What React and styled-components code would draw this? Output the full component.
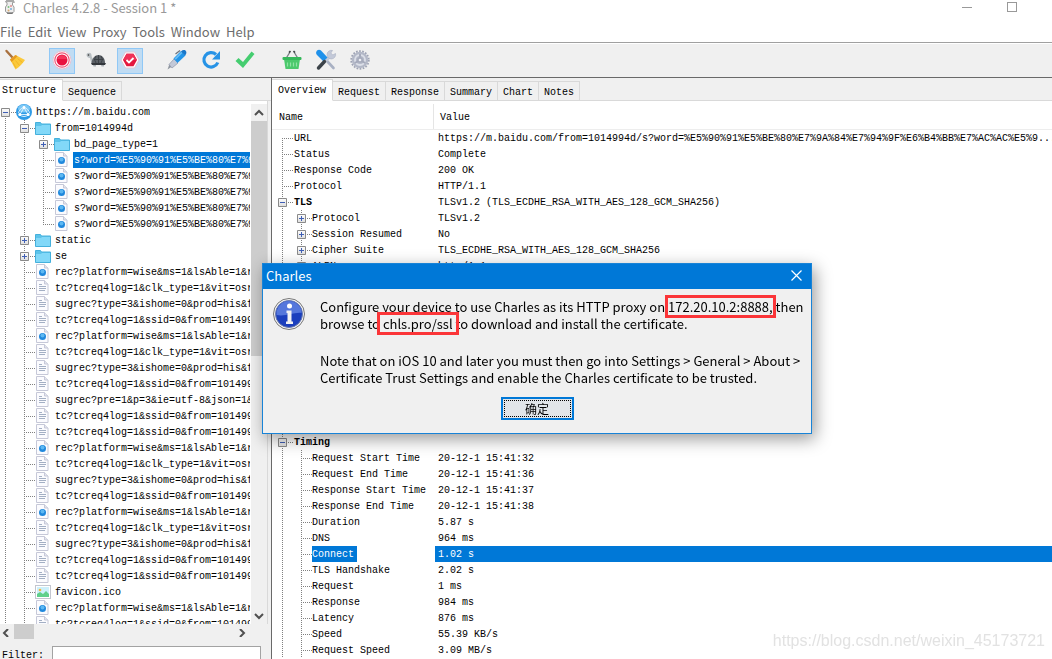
import styled, { createGlobalStyle, css } from "styled-components";

const GlobalStyle = createGlobalStyle`
  * {
    box-sizing: border-box;
  }

  body {
    margin: 0;
    background: #fff;
    overflow: hidden;
  }

  button, input {
    font: inherit;
    color: inherit;
  }
`;

const uiFont = `"Noto Sans CJK SC", sans-serif`;
const monoFont = `"Liberation Mono", monospace`;

const WORD = "s?word=%E5%90%91%E5%BE%80%E7%9A%84%E7%94%9F";
const REC = "rec?platform=wise&ms=1&lsAble=1&rset=rcmd";
const TC_CLICK = "tc?tcreq4log=1&clk_type=1&vit=osres";
const TC_SSID = "tc?tcreq4log=1&ssid=0&from=1014994d";
const SUG_TYPE = "sugrec?type=3&ishome=0&prod=his&from";
const SUG_PRE = "sugrec?pre=1&p=3&ie=utf-8&json=1&prod";

const sessionRows = [
  { depth: 0, icon: "globe", label: "https://m.baidu.com", toggle: "-", line: "start" },
  { depth: 1, icon: "folder", label: "from=1014994d", toggle: "-" },
  { depth: 2, icon: "folder", label: "bd_page_type=1", toggle: "+" },
  { depth: 2, icon: "dot", label: WORD, selected: true },
  { depth: 2, icon: "dot", label: WORD },
  { depth: 2, icon: "dot", label: WORD },
  { depth: 2, icon: "dot", label: WORD },
  { depth: 2, icon: "dot", label: WORD, line: "end" },
  { depth: 1, icon: "folder", label: "static", toggle: "+" },
  { depth: 1, icon: "folder", label: "se", toggle: "+" },
  { depth: 1, icon: "dot", label: REC },
  { depth: 1, icon: "text", label: TC_CLICK },
  { depth: 1, icon: "text", label: SUG_TYPE },
  { depth: 1, icon: "text", label: TC_SSID },
  { depth: 1, icon: "dot", label: REC },
  { depth: 1, icon: "text", label: TC_CLICK },
  { depth: 1, icon: "text", label: SUG_TYPE },
  { depth: 1, icon: "text", label: TC_SSID },
  { depth: 1, icon: "text", label: SUG_PRE },
  { depth: 1, icon: "text", label: TC_SSID },
  { depth: 1, icon: "text", label: TC_SSID },
  { depth: 1, icon: "dot", label: REC },
  { depth: 1, icon: "text", label: TC_CLICK },
  { depth: 1, icon: "text", label: SUG_TYPE },
  { depth: 1, icon: "text", label: TC_SSID },
  { depth: 1, icon: "dot", label: REC },
  { depth: 1, icon: "text", label: TC_CLICK },
  { depth: 1, icon: "text", label: SUG_TYPE },
  { depth: 1, icon: "text", label: TC_SSID },
  { depth: 1, icon: "text", label: TC_SSID },
  { depth: 1, icon: "image", label: "favicon.ico" },
  { depth: 1, icon: "dot", label: REC },
  { depth: 1, icon: "text", label: TC_SSID },
];

const requestRows = [
  {
    depth: 0,
    name: "URL",
    value:
      "https://m.baidu.com/from=1014994d/s?word=%E5%90%91%E5%BE%80%E7%9A%84%E7%94%9F%E6%B4%BB%E7%AC%AC%E5%9...",
    line: "start",
  },
  { depth: 0, name: "Status", value: "Complete" },
  { depth: 0, name: "Response Code", value: "200 OK" },
  { depth: 0, name: "Protocol", value: "HTTP/1.1" },
  { depth: 0, name: "TLS", value: "TLSv1.2 (TLS_ECDHE_RSA_WITH_AES_128_GCM_SHA256)", toggle: "-", bold: true },
  { depth: 1, name: "Protocol", value: "TLSv1.2", toggle: "+" },
  { depth: 1, name: "Session Resumed", value: "No", toggle: "+" },
  { depth: 1, name: "Cipher Suite", value: "TLS_ECDHE_RSA_WITH_AES_128_GCM_SHA256", toggle: "+" },
  { depth: 1, name: "ALPN", value: "http/1.1", toggle: "+" },
];

const timingRows = [
  { depth: 0, name: "Timing", value: "", toggle: "-", bold: true },
  { depth: 1, name: "Request Start Time", value: "20-12-1 15:41:32" },
  { depth: 1, name: "Request End Time", value: "20-12-1 15:41:36" },
  { depth: 1, name: "Response Start Time", value: "20-12-1 15:41:37" },
  { depth: 1, name: "Response End Time", value: "20-12-1 15:41:38" },
  { depth: 1, name: "Duration", value: "5.87 s" },
  { depth: 1, name: "DNS", value: "964 ms" },
  { depth: 1, name: "Connect", value: "1.02 s", selected: true },
  { depth: 1, name: "TLS Handshake", value: "2.02 s" },
  { depth: 1, name: "Request", value: "1 ms" },
  { depth: 1, name: "Response", value: "984 ms" },
  { depth: 1, name: "Latency", value: "876 ms" },
  { depth: 1, name: "Speed", value: "55.39 KB/s" },
  { depth: 1, name: "Request Speed", value: "3.09 MB/s" },
];

export default function App() {
  return (
    <Page>
      <GlobalStyle />
      <TitleBar>
        <JugIcon />
        <Title>Charles 4.2.8 - Session 1 *</Title>
        <WindowButton aria-label="Minimize">
          <svg width="11" height="11"><path d="M0 5.5h10" stroke="#999" /></svg>
        </WindowButton>
        <WindowButton aria-label="Maximize">
          <svg width="11" height="11"><rect x=".5" y=".5" width="9" height="9" fill="none" stroke="#999" /></svg>
        </WindowButton>
      </TitleBar>
      <MenuBar>
        {["File", "Edit", "View", "Proxy", "Tools", "Window", "Help"].map((item) => (
          <MenuItem key={item}>{item}</MenuItem>
        ))}
      </MenuBar>
      <Toolbar>
        <ToolGroup>
          <Tool aria-label="Clear session"><BroomIcon /></Tool>
        </ToolGroup>
        <ToolGroup>
          <Tool aria-label="Stop recording" $pressed><RecordIcon /></Tool>
          <Tool aria-label="Throttling"><TurtleIcon /></Tool>
          <Tool aria-label="Breakpoints" $pressed><BreakpointIcon /></Tool>
        </ToolGroup>
        <ToolGroup>
          <Tool aria-label="Compose"><PenIcon /></Tool>
          <Tool aria-label="Repeat"><RepeatIcon /></Tool>
          <Tool aria-label="Validate"><CheckIcon /></Tool>
        </ToolGroup>
        <ToolGroup>
          <Tool aria-label="Purchase"><BasketIcon /></Tool>
          <Tool aria-label="Tools"><ToolsIcon /></Tool>
          <Tool aria-label="Settings"><GearIcon /></Tool>
        </ToolGroup>
      </Toolbar>
      <Panels>
        <Sidebar />
        <Details />
      </Panels>
      <Watermark>https://blog.csdn.net/weixin_45173721</Watermark>
      <CertificateDialog />
    </Page>
  );
}

function Sidebar() {
  return (
    <SidebarWrapper>
      <Tabs>
        <Tab $active $flush>Structure</Tab>
        <Tab>Sequence</Tab>
      </Tabs>
      <TreeArea>
        <Tree>
          {sessionRows.map((row, i) => (
            <TreeRow key={i}>
              <Branch {...row} />
              <NodeIcon type={row.icon} />
              <TreeLabel $selected={row.selected}>{row.label}</TreeLabel>
            </TreeRow>
          ))}
        </Tree>
        <VerticalBar>
          <ScrollArrow aria-label="Scroll up"><Chevron d="M1 6l4-4 4 4" /></ScrollArrow>
          <VerticalThumb />
          <ScrollArrow aria-label="Scroll down"><Chevron d="M1 2l4 4 4-4" /></ScrollArrow>
        </VerticalBar>
      </TreeArea>
      <HorizontalBar>
        <ScrollArrow aria-label="Scroll left"><Chevron d="M6 0L2 4l4 4" /></ScrollArrow>
        <HorizontalThumb />
        <ScrollArrow aria-label="Scroll right"><Chevron d="M2 0l4 4-4 4" /></ScrollArrow>
      </HorizontalBar>
      <FilterRow>
        <label htmlFor="filter">Filter:</label>
        <FilterInput id="filter" />
      </FilterRow>
    </SidebarWrapper>
  );
}

function Details() {
  return (
    <DetailsWrapper>
      <Tabs>
        <Tab $active>Overview</Tab>
        {["Request", "Response", "Summary", "Chart", "Notes"].map((tab) => (
          <Tab key={tab}>{tab}</Tab>
        ))}
      </Tabs>
      <Table>
        <colgroup>
          <NameColumn />
          <col />
        </colgroup>
        <thead>
          <tr>
            <HeaderCell $divided>Name</HeaderCell>
            <HeaderCell>Value</HeaderCell>
          </tr>
        </thead>
        <tbody>
          {requestRows.map((row) => (
            <DetailRow key={row.name + row.depth} {...{ row }} />
          ))}
          <SpacerRow><td colSpan={2} /></SpacerRow>
          {timingRows.map((row) => (
            <DetailRow key={row.name} {...{ row }} />
          ))}
        </tbody>
      </Table>
    </DetailsWrapper>
  );
}

function DetailRow({ row }) {
  return (
    <tr>
      <Cell>
        <NameBox>
          <Branch {...row} />
          <NameText $bold={row.bold} $nested={row.depth > 0} $selected={row.selected}>
            {row.name}
          </NameText>
        </NameBox>
      </Cell>
      <Cell>
        <ValueText $selected={row.selected}>{row.value}</ValueText>
      </Cell>
    </tr>
  );
}

function Branch({ depth, toggle, line }) {
  return (
    <>
      {Array.from({ length: depth }, (_, i) => (
        <Guide key={i} />
      ))}
      <Joint $line={line}>
        {toggle && (
          <Toggle aria-label={toggle === "+" ? "Expand" : "Collapse"}>
            <svg width="9" height="9">
              <path d={toggle === "+" ? "M2 4.5h5M4.5 2v5" : "M2 4.5h5"} stroke="#3f5fb5" />
            </svg>
          </Toggle>
        )}
      </Joint>
    </>
  );
}

function CertificateDialog() {
  return (
    <Dialog role="dialog" aria-labelledby="dialog-title">
      <DialogTitle>
        <span id="dialog-title">Charles</span>
        <CloseButton aria-label="Close">
          <svg width="11" height="11"><path d="M.5.5l10 10M10.5.5l-10 10" stroke="#fff" strokeWidth="1.2" /></svg>
        </CloseButton>
      </DialogTitle>
      <DialogBody>
        <InfoIcon />
        <Message>
          <p>
            Configure your device to use Charles as its HTTP proxy on <Highlight>172.20.10.2:8888,</Highlight> then
            <br />
            browse to <Highlight $wide>chls.pro/ssl</Highlight> to download and install the certificate.
          </p>
          <p>
            Note that on iOS 10 and later you must then go into Settings &gt; General &gt; About &gt;
            <br />
            Certificate Trust Settings and enable the Charles certificate to be trusted.
          </p>
        </Message>
      </DialogBody>
      <ConfirmButton><span>确定</span></ConfirmButton>
    </Dialog>
  );
}

function Chevron({ d }) {
  return (
    <svg width="10" height="8">
      <path d={d} fill="none" stroke="#505050" strokeWidth="2" />
    </svg>
  );
}

function NodeIcon({ type }) {
  if (type === "globe") {
    return (
      <svg width="16" height="16" viewBox="0 0 16 16" overflow="visible">
        <circle cx="8" cy="8" r="8" fill="#2f9be6" />
        <ellipse cx="8" cy="4.5" rx="6" ry="4" fill="#7cc8f5" />
        <path d="M8 3.5L4 10.5h8zM8 3.5C5 4 3 6.500 2.500 9M8 3.500c3 .5 5 3 5.500 5.500M4 11c2 2 6 2 8 0" fill="none" stroke="#e8f6ff" strokeWidth=".9" />
        <circle cx="8" cy="3.500" r="1.400" fill="#fff" />
        <circle cx="3.800" cy="10.500" r="1.500" fill="#fff" />
        <circle cx="12.200" cy="10.500" r="1.500" fill="#fff" />
      </svg>
    );
  }
  if (type === "folder") {
    return (
      <svg width="16" height="16" viewBox="0 0 16 16">
        <path d="M.5 2.500h5l1 1.500h9v10.500H.500z" fill="#5cc3ea" stroke="#45b0dc" />
        <path d="M1 6h5l1-1h8v9H1z" fill="#82d8f8" />
      </svg>
    );
  }
  if (type === "image") {
    return (
      <svg width="16" height="16" viewBox="0 0 16 16">
        <rect x=".5" y="1.500" width="15" height="13" fill="#fff" stroke="#c3c6cf" />
        <rect x="2" y="3" width="12" height="10" fill="#cdf0fb" />
        <circle cx="5" cy="6" r="1.300" fill="#f6b73c" />
        <path d="M2 13v-3l3-2 3 2 3-3 3 3v3z" fill="#5fd08a" />
      </svg>
    );
  }
  return (
    <svg width="16" height="16" viewBox="0 0 16 16">
      <path d="M1.500.5h8l3.500 3.500v10.500H1.500z" fill="#fbfbfe" stroke="#c6c8d8" />
      <path d="M9.500.5v3.500H13" fill="#e4e5ee" stroke="#c6c8d8" />
      {type === "dot" ? (
        <>
          <circle cx="7.500" cy="8.500" r="3.500" fill="#2088dc" />
          <circle cx="7.500" cy="7.500" r="2" fill="#5db8f2" />
        </>
      ) : (
        <path d="M4 4.500h3M4 6.500h7M4 8.500h7M4 10.500h6" stroke="#a3afc4" />
      )}
    </svg>
  );
}

function JugIcon() {
  return (
    <svg width="12" height="14" viewBox="0 0 12 14">
      <path d="M1 1.500l2 1V5L1.500 7v4.500L4 13.500h4l2-2V7L8.500 5V2.500L11 2" fill="#eee" stroke="#9a9a9a" />
      <path d="M2 1h8" stroke="#aaa" strokeWidth="2" />
      <circle cx="4.500" cy="7" r="1" fill="#7cbf7f" />
      <circle cx="7" cy="6" r="1" fill="#e08f90" />
      <circle cx="7" cy="9" r="1" fill="#79aedb" />
      <circle cx="4.500" cy="10.500" r="1" fill="#d8aa70" />
      <path d="M3 13h6" stroke="#555" />
    </svg>
  );
}

function BroomIcon() {
  return (
    <svg width="22" height="22" viewBox="0 0 22 22">
      <path d="M2.500 2l5.500 6" stroke="#a9713f" strokeWidth="2.400" strokeLinecap="round" />
      <path d="M6 10.500L11.500 6 21 11c-2 3-5 6.500-9.500 9.500z" fill="#fbc93a" />
      <path d="M6 10.500L11.500 6l2 1.200-5.800 5.800z" fill="#e79a22" />
      <path d="M9 13.500l3 5.500M11.500 11.500l4 5M13.500 9.500l5 4" stroke="#eeae28" strokeWidth=".8" />
    </svg>
  );
}

function RecordIcon() {
  return (
    <svg width="20" height="20" viewBox="0 0 20 20">
      <circle cx="10" cy="10" r="9" fill="#fff" stroke="#e6c3d2" />
      <circle cx="10" cy="10" r="7.200" fill="none" stroke="#f1567a" strokeWidth="1.200" />
      <circle cx="10" cy="10" r="5.500" fill="#e8123f" />
      <path d="M5 9a5.200 5.200 0 0110 0z" fill="#f3355c" />
    </svg>
  );
}

function TurtleIcon() {
  return (
    <svg width="20" height="20" viewBox="0 0 20 20">
      <path d="M.5 5c0-3 5-3 5 0 0 2 1 4 3 6l-2 3C5 13 4.500 10 4 8 2.500 8 .5 7 .5 5z" fill="#b9bfc3" />
      <circle cx="2.500" cy="5" r=".8" fill="#333" />
      <path d="M5.500 13C6 8 9 5 12.500 5S19 8 19 13z" fill="#5b6066" />
      <path d="M5 13h15l-1 2H6z" fill="#33373c" />
      <path d="M10 6l-1.500 3.500L10 13M15 6l1.500 3.500L15 13M8 9.500h9.500M12.500 5v8" stroke="#3a3f45" fill="none" strokeWidth=".9" />
      <path d="M7 15h3v1.500H7.500zM15 15h3v1.500h-2.500z" fill="#aab0b5" />
    </svg>
  );
}

function BreakpointIcon() {
  return (
    <svg width="20" height="20" viewBox="0 0 20 20">
      <path d="M5.500 2h9L19 10l-4.500 8h-9L1 10z" fill="#fff" stroke="#e4c6d4" />
      <path d="M6.500 3.800h7L17 10l-3.500 6.200h-7L3 10z" fill="#e4173e" />
      <path d="M6.500 3.800h7L17 10H3z" fill="#ef3158" />
      <path d="M6.500 10l2.500 2.500 4.500-4.500" fill="none" stroke="#fff" strokeWidth="1.800" />
    </svg>
  );
}

function PenIcon() {
  return (
    <svg width="22" height="22" viewBox="0 0 22 22">
      <path d="M1.500 20.500l2-5.500 2.500 2.500z" fill="#8e959e" />
      <path d="M3 15.500L8 10l4 4-6 5z" fill="#c3c9d8" stroke="#8e95a8" strokeWidth=".7" />
      <path d="M7.500 9.500L15 2l4.500 4.500-8 7.500z" fill="#2395e8" />
      <path d="M8.500 9.500L15.500 2.500l1.200 1.200-7 7z" fill="#67bdf6" />
      <path d="M15 2.500C16.500 1 18 .8 19.500 1.500 21 3 20.500 5 19 6.500z" fill="#1976c9" />
      <path d="M9.500 5L14 1.500" stroke="#6d747d" strokeWidth="1.300" />
    </svg>
  );
}

function RepeatIcon() {
  return (
    <svg width="20" height="20" viewBox="0 0 20 20">
      <path d="M15 4.500A7.200 7.200 0 1016.800 12.500" fill="none" stroke="#2793e6" strokeWidth="3.200" />
      <path d="M19 1v8.500h-8z" fill="#2793e6" />
    </svg>
  );
}

function CheckIcon() {
  return (
    <svg width="20" height="20" viewBox="0 0 20 20">
      <path d="M.5 11l3-3L8 12 16.500 1.500l3 2.500L8 18z" fill="#45cd70" />
    </svg>
  );
}

function BasketIcon() {
  return (
    <svg width="20" height="20" viewBox="0 0 20 20">
      <path d="M4 8.500L8 2M16 8.500L12 2" stroke="#7b8086" strokeWidth="1.400" />
      <path d="M7 2.500L8.500 1M13 2.500L11.500 1" stroke="#3d4145" strokeWidth="1.600" />
      <path d="M2 9h16l-1.500 10h-13z" fill="#4bc96c" />
      <rect x=".5" y="7" width="19" height="3" rx="1" fill="#35b85a" />
      <path d="M5.500 12.500v4M8.500 12.500v4M11.500 12.500v4M14.500 12.500v4" stroke="#8fe3a4" strokeWidth="1.200" />
    </svg>
  );
}

function ToolsIcon() {
  return (
    <svg width="22" height="22" viewBox="0 0 22 22">
      <path d="M12 12l6.500 7" stroke="#a9b1c3" strokeWidth="2.600" strokeLinecap="round" />
      <path d="M10.500 12L15 7.500" stroke="#c3c9d8" strokeWidth="3" />
      <path d="M20.500 4.500A4.300 4.300 0 1117.500 1.500L15.800 4l2 2z" fill="#c3c9d8" stroke="#a7afc2" strokeWidth=".6" />
      <path d="M2 1.500c1.500-1.200 3-.8 4 0l6.500 7-4 4L2 6C.8 4.500.8 3 2 1.500z" fill="#1f91ea" />
      <path d="M9.500 12.500l-6 6.500" stroke="#3c4349" strokeWidth="3.400" strokeLinecap="round" />
    </svg>
  );
}

function GearIcon() {
  return (
    <svg width="20" height="20" viewBox="0 0 20 20">
      <circle cx="10" cy="10" r="8.800" fill="none" stroke="#9ea3b4" strokeWidth="1.800" strokeDasharray="1.700 1.400" />
      <circle cx="10" cy="10" r="8.200" fill="#b3b8c7" />
      <circle cx="10" cy="10" r="5" fill="none" stroke="#dcdfe8" strokeWidth="1.800" />
      <path d="M10 10V4M10 10l5.200 3M10 10l-5.200 3" stroke="#a5aabb" strokeWidth="2" />
      <circle cx="10" cy="10" r="2.800" fill="#a5aabb" />
      <circle cx="10" cy="10" r="1.300" fill="#eceef4" />
    </svg>
  );
}

function InfoIcon() {
  return (
    <svg width="32" height="32" viewBox="0 0 32 32">
      <circle cx="16" cy="16" r="15.500" fill="#f4f4f4" stroke="#777" />
      <circle cx="16" cy="16" r="13.500" fill="#1b3fbd" stroke="#6c7cae" />
      <path d="M3.500 17C3 9 9 3 16 3s13 6 12.500 12C21 14 12 19 3.500 17z" fill="#5577dc" />
      <circle cx="16.500" cy="8" r="2.500" fill="#fff" />
      <path d="M13.500 12.500H18.500V23.500H20V26h-7v-2.500h1.500V15h-1z" fill="#f2f2f2" />
    </svg>
  );
}

const bareButton = css`
  padding: 0;
  border: none;
  background: none;
`;

const Page = styled.div`
  height: 100vh;
  display: flex;
  flex-direction: column;
  overflow: hidden;
`;

const TitleBar = styled.header`
  height: 22px;
  flex-shrink: 0;
  display: flex;
  align-items: flex-start;
  padding: 0 34px 0 4px;
  font-family: ${uiFont};
  color: #999;
`;

const Title = styled.h1`
  flex-grow: 1;
  margin: 0 0 0 7px;
  font-size: 13px;
  font-weight: normal;
  line-height: 16px;
`;

const WindowButton = styled.button`
  ${bareButton}
  margin: 2px 0 0 34px;
  display: flex;
`;

const MenuBar = styled.nav`
  height: 21px;
  flex-shrink: 0;
  display: flex;
  align-items: center;
  gap: 6px;
  border-bottom: 1px solid #a0a0a0;
  font-family: ${uiFont};
  font-size: 13px;
  color: #6d6d6d;
`;

const MenuItem = styled.button`
  ${bareButton}
  line-height: 20px;
`;

const Toolbar = styled.div`
  height: 35px;
  flex-shrink: 0;
  display: flex;
  align-items: center;
  gap: 21px;
  padding-left: 2px;
  background: #f0f0f0;
  border-top: 1px solid #fff;
  border-bottom: 1px solid #696969;
`;

const ToolGroup = styled.div`
  display: flex;
  gap: 8px;
`;

const Tool = styled.button`
  width: 26px;
  height: 26px;
  padding: 0 0 1px;
  display: flex;
  justify-content: center;
  align-items: center;
  border: 1px solid ${(props) => (props.$pressed ? "#90c8f6" : "transparent")};
  background: ${(props) => (props.$pressed ? "#c0dcf3" : "none")};

  svg {
    flex-shrink: 0;
  }
`;

const Panels = styled.main`
  flex: 1;
  min-height: 0;
  display: grid;
  grid-template-columns: 272px minmax(0, 1fr);
  font-family: ${monoFont};
  font-size: 10px;
  color: #000;
`;

const SidebarWrapper = styled.section`
  min-height: 0;
  display: flex;
  flex-direction: column;
  background: #f0f0f0;
  border-right: 1px solid #696969;
`;

const DetailsWrapper = styled.section`
  min-height: 0;
  display: flex;
  flex-direction: column;
  overflow: hidden;
`;

const Tabs = styled.div`
  height: 23px;
  flex-shrink: 0;
  display: flex;
  align-items: flex-end;
  background: linear-gradient(#d9d9d9, #d9d9d9) bottom / 100% 1px no-repeat #f0f0f0;
`;

const Tab = styled.button`
  height: ${(props) => (props.$active ? 22 : 20)}px;
  padding: ${(props) => (props.$active ? "0 6px" : "2px 5px 0")};
  padding-left: ${(props) => props.$flush && "2px"};
  border: 1px solid #d9d9d9;
  border-left: none;
  border-bottom-color: ${(props) => (props.$active ? "#fff" : "#d9d9d9")};
  background: ${(props) => (props.$active ? "#fff" : "#f0f0f0")};
`;

const TreeArea = styled.div`
  flex: 1;
  min-height: 0;
  margin-right: 3px;
  display: flex;
  padding-top: 3px;
  background: #fff;
  border-right: 1px solid #d9d9d9;
`;

const Tree = styled.ul`
  flex: 1;
  min-width: 0;
  margin: 0;
  padding: 0 1px 0 0;
  list-style: none;
  overflow: hidden;
`;

const TreeRow = styled.li`
  height: 16px;
  display: flex;

  > svg {
    flex-shrink: 0;
  }
`;

const TreeLabel = styled.span`
  flex: ${(props) => (props.$selected ? "1" : "0 1 auto")};
  margin-left: 3px;
  padding-left: 1px;
  line-height: 18px;
  white-space: nowrap;
  overflow: hidden;
  color: ${(props) => (props.$selected ? "#fff" : "#000")};
  background: ${(props) => (props.$selected ? "#0078d7" : "none")};
`;

const dotsDown = "repeating-linear-gradient(to bottom, #808080 0 1px, transparent 1px 2px)";
const dotsAcross = "repeating-linear-gradient(to right, #808080 0 1px, transparent 1px 2px)";

const Guide = styled.span`
  width: 19px;
  height: 16px;
  flex-shrink: 0;
  background: ${dotsDown} 5px 0 / 1px 16px no-repeat;
`;

// "start" keeps the lower half of the line, "end" the upper half
const Joint = styled.span`
  width: 16px;
  height: 16px;
  flex-shrink: 0;
  padding: 4px 0 0 1px;
  background:
    ${dotsDown} 5px ${(props) => (props.$line === "start" ? "8px" : "0")} / 1px
      ${(props) => (props.$line ? "8px" : "16px")} no-repeat,
    ${dotsAcross} 5px 8px / 11px 1px no-repeat;
`;

const Toggle = styled.button`
  width: 9px;
  height: 9px;
  padding: 0;
  display: block;
  border: none;
  border-radius: 1px;
  background: linear-gradient(#fff, #dcdcdc);
  box-shadow: inset 0 0 0 1px #8a8a8a;

  svg {
    display: block;
  }
`;

const VerticalBar = styled.div`
  width: 16px;
  display: flex;
  flex-direction: column;
  justify-content: space-between;
  background: #f0f0f0;
`;

const ScrollArrow = styled.button`
  ${bareButton}
  width: 16px;
  height: 17px;
  flex-shrink: 0;
  display: flex;
  justify-content: center;
  align-items: center;
`;

const VerticalThumb = styled.div`
  height: 235px;
  margin-bottom: auto;
  background: #cdcdcd;
`;

const HorizontalBar = styled.div`
  height: 17px;
  width: 251px;
  flex-shrink: 0;
  display: flex;
  justify-content: space-between;

  > :first-child {
    width: 14px;
  }
`;

const HorizontalThumb = styled.div`
  width: 20px;
  height: 15px;
  margin-right: auto;
  background: #cdcdcd;
`;

const FilterRow = styled.div`
  height: 18px;
  flex-shrink: 0;
  display: flex;
  gap: 8px;
  padding: 5px 10px 0 2px;
  overflow: hidden;
  line-height: 20px;

  label {
    width: 42px;
  }
`;

const FilterInput = styled.input`
  flex: 1;
  min-width: 0;
  height: 22px;
  border: 1px solid #a3a3a3;
  background: #fff;
`;

const Table = styled.table`
  width: 100%;
  table-layout: fixed;
  border-collapse: collapse;
`;

const NameColumn = styled.col`
  width: 162px;
`;

const HeaderCell = styled.th`
  height: 28px;
  padding: 5px 0 0 ${(props) => (props.$divided ? 7 : 6)}px;
  text-align: left;
  font-weight: normal;
  border-bottom: 1px solid #ededed;
  background: ${(props) =>
    props.$divided ? "linear-gradient(#e5e5e5, #e5e5e5) right 3px / 1px 25px no-repeat" : "none"};
`;

const Cell = styled.td`
  height: 16px;
  padding: 0;
`;

const SpacerRow = styled.tr`
  height: 160px;
`;

const NameBox = styled.div`
  height: 16px;
  display: flex;
  padding-left: 5px;
`;

const NameText = styled.span`
  padding: 0 3px 0 ${(props) => (props.$nested ? 0 : 1)}px;
  line-height: 18px;
  white-space: nowrap;
  font-weight: ${(props) => (props.$bold ? "bold" : "normal")};
  color: ${(props) => (props.$selected ? "#fff" : "#000")};
  background: ${(props) => (props.$selected ? "#0078d7" : "none")};
`;

const ValueText = styled.div`
  height: 16px;
  margin-left: 1px;
  padding-left: 3px;
  line-height: 17px;
  white-space: nowrap;
  overflow: hidden;
  color: ${(props) => (props.$selected ? "#fff" : "#000")};
  background: ${(props) => (props.$selected ? "#0078d7" : "none")};
`;

const Watermark = styled.div`
  position: fixed;
  right: 7px;
  bottom: 9px;
  font: 16px/18px "Liberation Sans", Arial, sans-serif;
  color: #e2e2e2;
`;

const Dialog = styled.div`
  position: fixed;
  left: 262px;
  top: 263px;
  width: 550px;
  padding-bottom: 13px;
  display: flex;
  flex-direction: column;
  font-family: ${uiFont};
  font-size: 13px;
  color: #000;
  background: #f0f0f0;
  border: 1px solid #1883d7;
  box-shadow: 3px 5px 16px rgba(0, 0, 0, 0.4);
`;

const DialogTitle = styled.div`
  height: 25px;
  display: flex;
  justify-content: space-between;
  align-items: center;
  padding: 0 9px 2px 3px;
  color: #fff;
  background: #0078d7;
`;

const CloseButton = styled.button`
  ${bareButton}
  display: flex;
`;

const DialogBody = styled.div`
  display: flex;
  gap: 15px;
  padding: 9px 0 0 10px;

  > svg {
    flex-shrink: 0;
  }
`;

const Message = styled.div`
  line-height: 17px;
  white-space: nowrap;

  p {
    margin: 0 0 20px;
  }

  p + p {
    margin-bottom: 11px;
  }
`;

const Highlight = styled.mark`
  position: relative;
  color: inherit;
  background: none;

  &::after {
    content: "";
    position: absolute;
    inset: -2px ${(props) => (props.$wide ? -6 : -3)}px;
    border: 3px solid #fb3538;
  }
`;

const ConfirmButton = styled.button`
  width: 73px;
  height: 23px;
  padding: 1px;
  align-self: center;
  display: flex;
  border: 2px solid #0078d7;
  background: #e1e5e9;
  font-size: 12px;

  span {
    flex: 1;
    line-height: 15px;
    border: 1px dotted #000;
  }
`;
